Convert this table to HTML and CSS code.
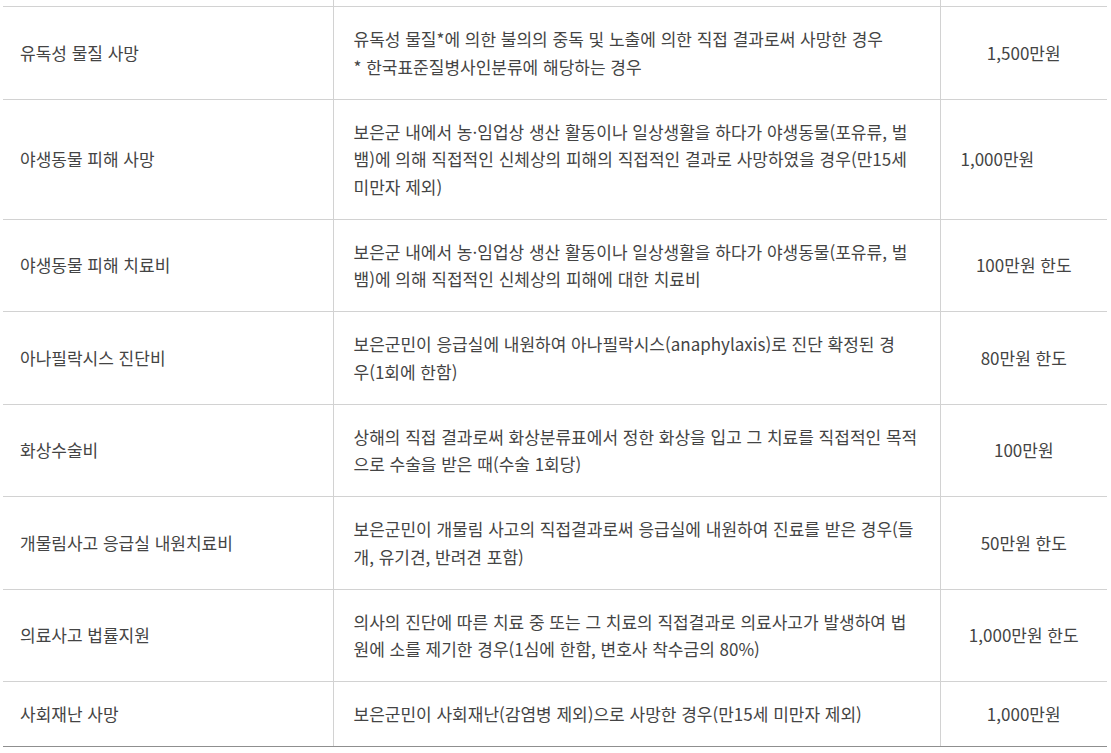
FILE: index.html
```html
<!DOCTYPE html>
<html lang="ko">
<head>
<meta charset="utf-8">
<title>보험 보장 내용</title>
<link rel="stylesheet" href="styles.css">
</head>
<body>
<div class="wrap">
<table class="cover">
  <colgroup><col class="c1"><col class="c2"><col class="c3"></colgroup>
  <tbody>
    <tr class="spacer"><td></td><td></td><td></td></tr>
    <tr>
      <td class="name">유독성 물질 사망</td>
      <td class="desc">유독성 물질*에 의한 불의의 중독 및 노출에 의한 직접 결과로써 사망한 경우<br>* 한국표준질병사인분류에 해당하는 경우</td>
      <td class="amt">1,500만원</td>
    </tr>
    <tr>
      <td class="name">야생동물 피해 사망</td>
      <td class="desc">보은군 내에서 농·임업상 생산 활동이나 일상생활을 하다가 야생동물(포유류, 벌뱀)에 의해 직접적인 신체상의 피해의 직접적인 결과로 사망하였을 경우(만15세 미만자 제외)</td>
      <td class="amt left">1,000만원</td>
    </tr>
    <tr>
      <td class="name">야생동물 피해 치료비</td>
      <td class="desc">보은군 내에서 농·임업상 생산 활동이나 일상생활을 하다가 야생동물(포유류, 벌뱀)에 의해 직접적인 신체상의 피해에 대한 치료비</td>
      <td class="amt">100만원 한도</td>
    </tr>
    <tr>
      <td class="name">아나필락시스 진단비</td>
      <td class="desc">보은군민이 응급실에 내원하여 아나필락시스(anaphylaxis)로 진단 확정된 경<br>우(1회에 한함)</td>
      <td class="amt">80만원 한도</td>
    </tr>
    <tr>
      <td class="name">화상수술비</td>
      <td class="desc">상해의 직접 결과로써 화상분류표에서 정한 화상을 입고 그 치료를 직접적인 목적으로 수술을 받은 때(수술 1회당)</td>
      <td class="amt">100만원</td>
    </tr>
    <tr>
      <td class="name">개물림사고 응급실 내원치료비</td>
      <td class="desc">보은군민이 개물림 사고의 직접결과로써 응급실에 내원하여 진료를 받은 경우(들개, 유기견, 반려견 포함)</td>
      <td class="amt">50만원 한도</td>
    </tr>
    <tr>
      <td class="name">의료사고 법률지원</td>
      <td class="desc">의사의 진단에 따른 치료 중 또는 그 치료의 직접결과로 의료사고가 발생하여 법원에 소를 제기한 경우(1심에 한함, 변호사 착수금의 80%)</td>
      <td class="amt">1,000만원 한도</td>
    </tr>
    <tr class="last">
      <td class="name">사회재난 사망</td>
      <td class="desc">보은군민이 사회재난(감염병 제외)으로 사망한 경우(만15세 미만자 제외)</td>
      <td class="amt">1,000만원</td>
    </tr>
  </tbody>
</table>
</div>
</body>
</html>
```

FILE: styles.css
```css
html, body {
  margin: 0;
  padding: 0;
  background: #ffffff;
}
body {
  font-family: "Noto Sans CJK KR", "Noto Sans", sans-serif;
  color: #444444;
  font-size: 17px;
}
.wrap {
  padding-left: 3px;
  width: 1104px;
}
.cover {
  width: 1104px;
  border-collapse: collapse;
  table-layout: fixed;
  border-bottom: 1px solid #8f8f8f;
}
.c1 { width: 330px; }
.c2 { width: 607px; }
.c3 { width: 167px; }
.cover td {
  border-bottom: 1px solid #d2d2d2;
  padding: 18px 20px 18.5px;
  line-height: 27.5px;
  vertical-align: middle;
  letter-spacing: 0;
  word-break: break-all;
}
.cover td + td {
  border-left: 1px solid #d2d2d2;
}
.cover .spacer td {
  padding: 0;
  height: 6px;
  line-height: 0;
}
.cover td.name {
  padding-left: 17px;
}
.cover td.amt {
  text-align: center;
  padding-left: 10px;
  padding-right: 10px;
}
.cover td.amt.left {
  text-align: left;
  padding-left: 20px;
}
.cover .last td {
  border-bottom: 1px solid #8f8f8f;
}
```
